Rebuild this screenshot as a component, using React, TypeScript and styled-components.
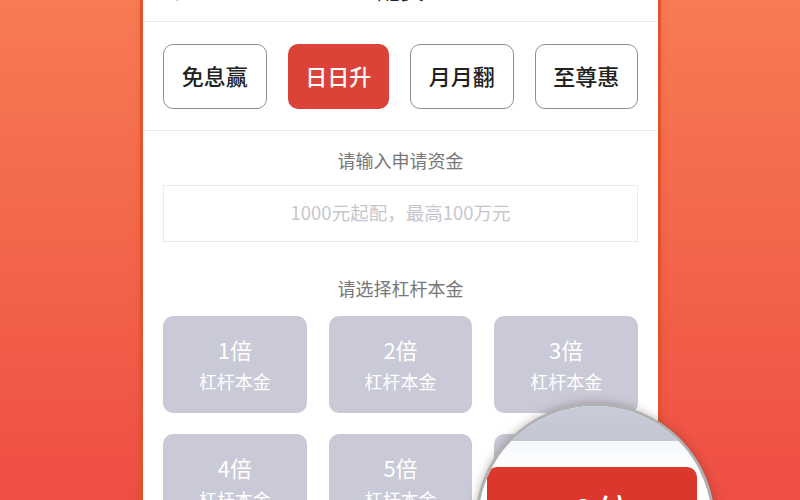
import React from 'react';
import styled, { createGlobalStyle } from 'styled-components';

const GlobalStyle = createGlobalStyle`
  html, body {
    margin: 0;
    padding: 0;
  }
  body {
    font-family: "Noto Sans CJK SC", "Noto Sans", sans-serif;
  }
`;

const Stage = styled.div`
  position: relative;
  width: 800px;
  height: 500px;
  overflow: hidden;
  background: linear-gradient(180deg, #f77b53 0%, #f3654a 50%, #ee4e44 100%);
  display: flex;
  justify-content: center;
  align-items: flex-start;
`;

const Phone = styled.div`
  width: 515px;
  margin-left: 1px;
  margin-top: -34px;
  min-height: 560px;
  background: #fff;
  box-shadow: -3px 0 0 #e4532c, 3px 0 0 #e4532c, 0 0 8px rgba(160, 40, 10, 0.35);
  display: flex;
  flex-direction: column;
  flex: none;
`;

const Header = styled.div`
  height: 56px;
  flex: none;
  box-sizing: border-box;
  display: flex;
  align-items: center;
  justify-content: center;
  position: relative;
  border-bottom: 1px solid #ececec;
`;

const Back = styled.div`
  position: absolute;
  left: 22px;
  top: 16px;
  width: 20px;
  height: 20px;
`;

const Title = styled.div`
  font-size: 24px;
  color: #222;
  margin-top: -10px;
`;

const Tabs = styled.div`
  flex: none;
  display: flex;
  gap: 21px;
  padding: 22px 20px 21px;
  border-bottom: 1px solid #ececec;
`;

const Tab = styled.div<{ $active?: boolean }>`
  flex: 1;
  height: 65px;
  box-sizing: border-box;
  padding-bottom: 4px;
  border-radius: 10px;
  border: ${(p) => (p.$active ? 'none' : '1.5px solid #8e8e8e')};
  background: ${(p) => (p.$active ? '#db4339' : '#fff')};
  color: ${(p) => (p.$active ? '#fff' : '#222')};
  font-size: 22px;
  font-weight: 500;
  display: flex;
  align-items: center;
  justify-content: center;
`;

const Body = styled.div`
  flex: none;
  padding: 17px 20px 0;
  display: flex;
  flex-direction: column;
`;

const Label = styled.div<{ $top?: number }>`
  font-size: 18px;
  line-height: 24px;
  color: #777;
  text-align: center;
  margin-top: ${(p) => p.$top ?? 0}px;
`;

const Input = styled.div`
  margin-top: 13px;
  height: 57px;
  box-sizing: border-box;
  padding-bottom: 3px;
  border: 1.5px solid #ebebeb;
  display: flex;
  align-items: center;
  justify-content: center;
  font-size: 18.5px;
  color: #c6c6ce;
`;

const Grid = styled.div`
  margin-top: 16px;
  display: grid;
  grid-template-columns: repeat(3, 1fr);
  gap: 21px 22px;
`;

const Cell = styled.div`
  height: 97px;
  box-sizing: border-box;
  padding-bottom: 2px;
  border-radius: 10px;
  background: #c9c9d7;
  color: #fff;
  display: flex;
  flex-direction: column;
  align-items: center;
  justify-content: center;
`;

const Times = styled.div`
  font-size: 22px;
  line-height: 30px;
`;

const Sub = styled.div`
  font-size: 18px;
  line-height: 26px;
  margin-top: 4px;
`;

const Lens = styled.div`
  position: absolute;
  left: 475px;
  top: 403px;
  width: 240px;
  height: 240px;
  border-radius: 50%;
  box-sizing: border-box;
  border: 3px solid #aeb2b2;
  box-shadow: 0 0 10px rgba(80, 40, 30, 0.35);
  overflow: hidden;
  background: #fff;
  display: flex;
  flex-direction: column;
`;

const LensGray = styled.div`
  height: 35px;
  flex: none;
  background: linear-gradient(180deg, #c9cbd8, #c4c6d3);
`;

const LensWhite = styled.div`
  height: 26px;
  flex: none;
  background: linear-gradient(180deg, #f3f7fa, #ffffff);
`;

const LensButton = styled.div`
  flex: none;
  margin: 0 15px 0 9px;
  height: 110px;
  border-radius: 10px;
  background: #dc372c;
  color: #fff;
  font-size: 40px;
  display: flex;
  justify-content: center;
  padding-top: 16px;
  box-sizing: border-box;
`;

const cells = [1, 2, 3, 4, 5, 6];

export default function App() {
  return (
    <>
      <GlobalStyle />
      <Stage>
        <Phone>
          <Header>
            <Back>
              <svg width="20" height="20" viewBox="0 0 20 20">
                <path d="M13 2 L5 10 L13 18" fill="none" stroke="#333" strokeWidth="2.2" />
              </svg>
            </Back>
            <Title>配资</Title>
          </Header>
          <Tabs>
            <Tab>免息赢</Tab>
            <Tab $active>日日升</Tab>
            <Tab>月月翻</Tab>
            <Tab>至尊惠</Tab>
          </Tabs>
          <Body>
            <Label>请输入申请资金</Label>
            <Input>1000元起配，最高100万元</Input>
            <Label $top={34}>请选择杠杆本金</Label>
            <Grid>
              {cells.map((n) => (
                <Cell key={n}>
                  <Times>{n}倍</Times>
                  <Sub>杠杆本金</Sub>
                </Cell>
              ))}
            </Grid>
          </Body>
        </Phone>
        <Lens>
          <LensGray />
          <LensWhite />
          <LensButton>10倍</LensButton>
        </Lens>
      </Stage>
    </>
  );
}
